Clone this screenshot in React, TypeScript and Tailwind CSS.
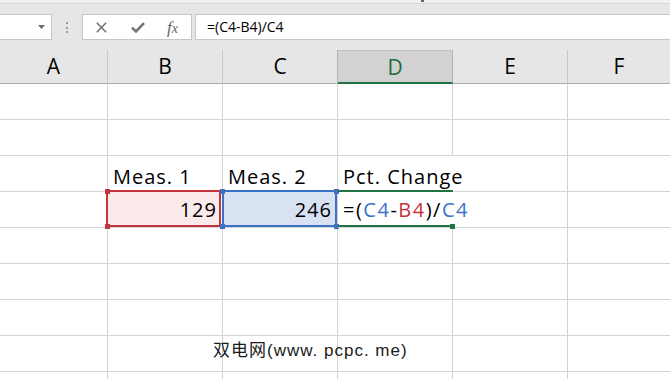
const grid = 'border-[#d4d4d4]';

function EmptyRow() {
  return (
    <div className="flex h-[36px] shrink-0">
      <div className={`w-[108px] shrink-0 border-r border-b ${grid}`} />
      <div className={`w-[115px] shrink-0 border-r border-b ${grid}`} />
      <div className={`w-[115px] shrink-0 border-r border-b ${grid}`} />
      <div className={`w-[115px] shrink-0 border-r border-b ${grid}`} />
      <div className={`w-[115px] shrink-0 border-r border-b ${grid}`} />
      <div className={`flex-1 border-b ${grid}`} />
    </div>
  );
}

export default function App() {
  return (
    <div className="relative h-[379px] w-[670px] overflow-hidden bg-white font-['Open_Sans',sans-serif] text-black">
      {/* window strip */}
      <div className="relative h-[4px] border-b border-[#d5d5d5] bg-[#f0f0f0]">
        <span className="absolute left-[421px] top-0 h-[2px] w-[3px] bg-[#666]" />
      </div>

      {/* formula bar */}
      <div className="flex h-[46px] items-start bg-[#e6e6e6] pt-[10px]">
        <div className="flex h-[26px] w-[52px] shrink-0 items-center justify-end border border-l-0 border-[#c6c6c6] bg-white pr-[6px]">
          <svg width="7" height="4" viewBox="0 0 7 4">
            <path d="M0 0h7L3.5 4z" fill="#6b6b6b" />
          </svg>
        </div>
        <div className="ml-[14px] mt-[8px] flex flex-col gap-[2.5px]">
          <span className="h-[2px] w-[2px] bg-[#9a9a9a]" />
          <span className="h-[2px] w-[2px] bg-[#9a9a9a]" />
          <span className="h-[2px] w-[2px] bg-[#9a9a9a]" />
        </div>
        <div className="ml-[14px] flex h-[26px] w-[110px] shrink-0 items-center border border-[#c6c6c6] bg-white pl-[13px]">
          <svg width="11" height="11" viewBox="0 0 11 11">
            <path d="M0.8 0.8L10.2 10.2M10.2 0.8L0.8 10.2" stroke="#6f6f6f" strokeWidth="1.5" fill="none" />
          </svg>
          <svg width="14" height="11" viewBox="0 0 14 11" className="ml-[24px]">
            <path d="M1 5.6L5 9.4L13 1.2" stroke="#737373" strokeWidth="2.6" fill="none" />
          </svg>
          <span className="ml-[22px] font-['Liberation_Serif',serif] text-[17px] italic leading-none text-[#666]">
            f<span className="text-[14px]">x</span>
          </span>
        </div>
        <div className="ml-[3px] flex h-[26px] flex-1 items-center border border-r-0 border-[#c6c6c6] bg-white pl-[11px] text-[14px] leading-[24px]">
          =(C4-B4)/C4
        </div>
      </div>

      {/* column headers */}
      <div className="flex h-[34px] bg-[#e6e6e6] text-[21px] leading-[21px]">
        <div className="flex w-[108px] shrink-0 items-center justify-center border-r border-b border-r-[#c8c8c8] border-b-[#ababab]">A</div>
        <div className="flex w-[115px] shrink-0 items-center justify-center border-r border-b border-r-[#c8c8c8] border-b-[#ababab]">B</div>
        <div className="flex w-[115px] shrink-0 items-center justify-center border-r border-b border-r-[#b4b4b4] border-b-[#ababab]">C</div>
        <div className="flex w-[115px] shrink-0 items-center justify-center border-r border-t border-b-2 border-r-[#b4b4b4] border-t-[#c0c0c0] border-b-[#217346] bg-[#d2d2d2] pt-[1px] text-[#1e6b41]">D</div>
        <div className="flex w-[115px] shrink-0 items-center justify-center border-r border-b border-r-[#c8c8c8] border-b-[#ababab]">E</div>
        <div className="flex flex-1 items-center justify-center border-b border-b-[#ababab]">F</div>
      </div>

      {/* sheet */}
      <div className="flex flex-col text-[20px] leading-[20px] tracking-[1px]">
        <EmptyRow />
        <EmptyRow />

        <div className="flex h-[36px] shrink-0">
          <div className={`w-[108px] shrink-0 border-r border-b ${grid}`} />
          <div className={`flex w-[115px] shrink-0 items-end border-r border-b pb-[4px] pl-[5px] ${grid}`}>Meas. 1</div>
          <div className={`flex w-[115px] shrink-0 items-end border-r border-b pb-[4px] pl-[5px] ${grid}`}>Meas. 2</div>
          <div className={`relative z-10 flex w-[115px] shrink-0 items-end whitespace-nowrap border-r border-b border-r-white pb-[4px] pl-[5px] ${grid}`}>
            Pct. Change
          </div>
          <div className={`w-[115px] shrink-0 border-r border-b ${grid}`} />
          <div className={`flex-1 border-b ${grid}`} />
        </div>

        <div className="flex h-[36px] shrink-0">
          <div className={`w-[108px] shrink-0 border-r border-b ${grid}`} />
          <div className={`relative flex w-[115px] shrink-0 items-end justify-end border-r border-b pb-[7px] pr-[5px] ${grid}`}>
            <span className="absolute -left-[2px] -top-[2px] bottom-0 right-[1px] border-2 border-[#c4343c] bg-[#fbeaea]" />
            <span className="absolute -left-[3px] -top-[3px] h-[5px] w-[5px] bg-[#c4343c]" />
            <span className="absolute -bottom-[2px] -left-[3px] h-[5px] w-[5px] bg-[#c4343c]" />
            <span className="relative">129</span>
          </div>
          <div className={`relative flex w-[115px] shrink-0 items-end justify-end border-r border-b pb-[7px] pr-[5px] ${grid}`}>
            <span className="absolute -left-[1px] -top-[2px] bottom-0 right-0 border-2 border-[#3b72c6] bg-[#d9e2f3]" />
            <span className="absolute -left-[3px] -top-[3px] h-[5px] w-[5px] bg-[#3b72c6]" />
            <span className="absolute -bottom-[2px] -left-[3px] h-[5px] w-[5px] bg-[#3b72c6]" />
            <span className="absolute -right-[2px] -top-[3px] h-[5px] w-[5px] bg-[#3b72c6]" />
            <span className="absolute -bottom-[2px] -right-[2px] h-[5px] w-[5px] bg-[#3b72c6]" />
            <span className="relative">246</span>
          </div>
          <div className={`relative z-10 flex w-[115px] shrink-0 items-end whitespace-nowrap border-r border-b border-r-white pb-[7px] pl-[5px] ${grid}`}>
            <span className="absolute -top-[2px] bottom-0 left-0 -right-[1px] border-y-2 border-[#217346]" />
            <span className="absolute -bottom-[2px] -right-[3px] h-[5px] w-[5px] bg-[#217346]" />
            <span className="relative tracking-[1.5px]">
              =(<span className="text-[#3b72c6]">C4</span>-<span className="text-[#c4343c]">B4</span>)/
              <span className="text-[#3b72c6]">C4</span>
            </span>
          </div>
          <div className={`w-[115px] shrink-0 border-r border-b ${grid}`} />
          <div className={`flex-1 border-b ${grid}`} />
        </div>

        <EmptyRow />
        <EmptyRow />
        <EmptyRow />
        <EmptyRow />
        <EmptyRow />
      </div>

      {/* watermark */}
      <div className="absolute left-[213px] top-[342px] whitespace-nowrap font-['Liberation_Sans','Noto_Sans_CJK_SC',sans-serif] text-[17px] leading-[17px] tracking-[1px] text-[#1a1a1a]">
        双电网(www. pcpc. me)
      </div>
    </div>
  );
}
